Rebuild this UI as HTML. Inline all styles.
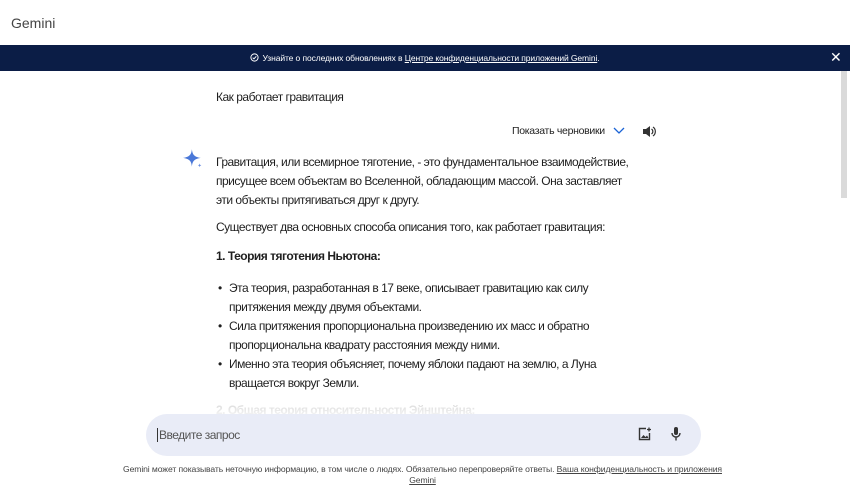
<!DOCTYPE html>
<html><head><meta charset="utf-8"><style>
*{margin:0;padding:0;box-sizing:border-box}
body{width:850px;height:493px;overflow:hidden;background:#fff;font-family:"Liberation Sans",sans-serif;color:#1f1f1f;position:relative}
.t{position:absolute;white-space:nowrap;font-size:12px;letter-spacing:-0.5px}
.banner{position:absolute;left:0;top:45px;width:850px;height:26px;background:#0b1d46;color:#fff;font-size:8.5px;text-align:center;line-height:26px;letter-spacing:-0.1px}
.banner u{color:#fff}
.sb{position:absolute;left:841px;top:71px;width:6px;height:127px;background:#dadada}
.input{position:absolute;left:146px;top:414px;width:555px;height:42px;border-radius:21px;background:#e9ecf7}
.fade{position:absolute;left:0;top:398px;width:850px;height:18px;background:linear-gradient(rgba(255,255,255,.3),rgba(255,255,255,.85))}
</style></head><body>
<div class="t" style="left:11px;top:15px;font-size:14px;color:#444;letter-spacing:0">Gemini</div>
<div class="banner"><svg width="9" height="9" viewBox="0 0 10 10" style="vertical-align:-1px;margin-right:3px"><circle cx="5" cy="5" r="4" fill="none" stroke="#fff" stroke-width="1.1"/><path d="M3 5.2l1.4 1.3 2.6-2.8" fill="none" stroke="#fff" stroke-width="1.1"/></svg>Узнайте о последних обновлениях в <u>Центре конфиденциальности приложений Gemini</u>.</div>
<div class="t" style="left:830px;top:49px;color:#fff;font-size:14px">✕</div>
<div class="sb"></div>
<div class="t" style="left:216px;top:90px">Как работает гравитация</div>
<div class="t" style="left:512px;top:125px;font-size:10.5px;letter-spacing:-0.3px">Показать черновики</div>
<svg style="position:absolute;left:613px;top:127px" width="12" height="8"><path d="M1 1l5 5 5-5" fill="none" stroke="#1a63d6" stroke-width="1.3"/></svg>
<svg style="position:absolute;left:642px;top:125px" width="14" height="13" viewBox="0 0 14 13"><path d="M1 4h3l4-3v11l-4-3H1z" fill="#333"/><path d="M9.5 4a3 3 0 010 5M11 2a5.5 5.5 0 010 9" fill="none" stroke="#333" stroke-width="1.2"/></svg>
<svg style="position:absolute;left:182px;top:148px" width="22" height="22" viewBox="0 0 20 20"><path d="M9 1C9.5 6 11 8 17 9 11 10 9.5 12 9 17 8.5 12 7 10 1 9 7 8 8.5 6 9 1z" fill="#4a78d8"/><path d="M16 14c.2 1.2.6 1.6 1.6 1.8-1 .2-1.4.6-1.6 1.8-.2-1.2-.6-1.6-1.6-1.8 1-.2 1.4-.6 1.6-1.8z" fill="#6a8ee0"/></svg>
<div class="t" style="left:216px;top:153px;line-height:19px">Гравитация, или всемирное тяготение, - это фундаментальное взаимодействие,<br>присущее всем объектам во Вселенной, обладающим массой. Она заставляет<br>эти объекты притягиваться друг к другу.</div>
<div class="t" style="left:216px;top:220px">Существует два основных способа описания того, как работает гравитация:</div>
<div class="t" style="left:216px;top:249px;font-weight:bold">1. Теория тяготения Ньютона:</div>
<div class="t" style="left:218px;top:279px;line-height:19px">•<br><br>•<br><br>•</div>
<div class="t" style="left:229px;top:279px;line-height:19px">Эта теория, разработанная в 17 веке, описывает гравитацию как силу<br>притяжения между двумя объектами.<br>Сила притяжения пропорциональна произведению их масс и обратно<br>пропорциональна квадрату расстояния между ними.<br>Именно эта теория объясняет, почему яблоки падают на землю, а Луна<br>вращается вокруг Земли.</div>
<div class="t" style="left:216px;top:403px;font-weight:bold;color:#bbb">2. Общая теория относительности Эйнштейна:</div>
<div class="fade"></div>
<div class="input"></div>
<div style="position:absolute;left:157px;top:428px;width:1px;height:14px;background:#333"></div>
<div class="t" style="left:159px;top:428px;color:#555">Введите запрос</div>
<svg style="position:absolute;left:637px;top:427px" width="15" height="15" viewBox="0 0 15 15"><path d="M9 1.5H2.5v11h10V6" fill="none" stroke="#333" stroke-width="1.4"/><path d="M4 11l2.5-3 2 2 1.5-1.5 1.5 2.5z" fill="#333"/><path d="M12 0.5v4M10 2.5h4" stroke="#333" stroke-width="1.3"/></svg>
<svg style="position:absolute;left:670px;top:426px" width="12" height="16" viewBox="0 0 12 16"><rect x="4" y="1" width="4" height="8" rx="2" fill="#333"/><path d="M2 7a4 4 0 008 0M6 11v3.5" fill="none" stroke="#333" stroke-width="1.4"/></svg>
<div class="t" style="left:0;width:845px;text-align:center;top:464px;font-size:8.6px;color:#444;line-height:11px;letter-spacing:-0.1px">Gemini может показывать неточную информацию, в том числе о людях. Обязательно перепроверяйте ответы. <u>Ваша конфиденциальность и приложения</u><br><u>Gemini</u></div>
</body></html>
